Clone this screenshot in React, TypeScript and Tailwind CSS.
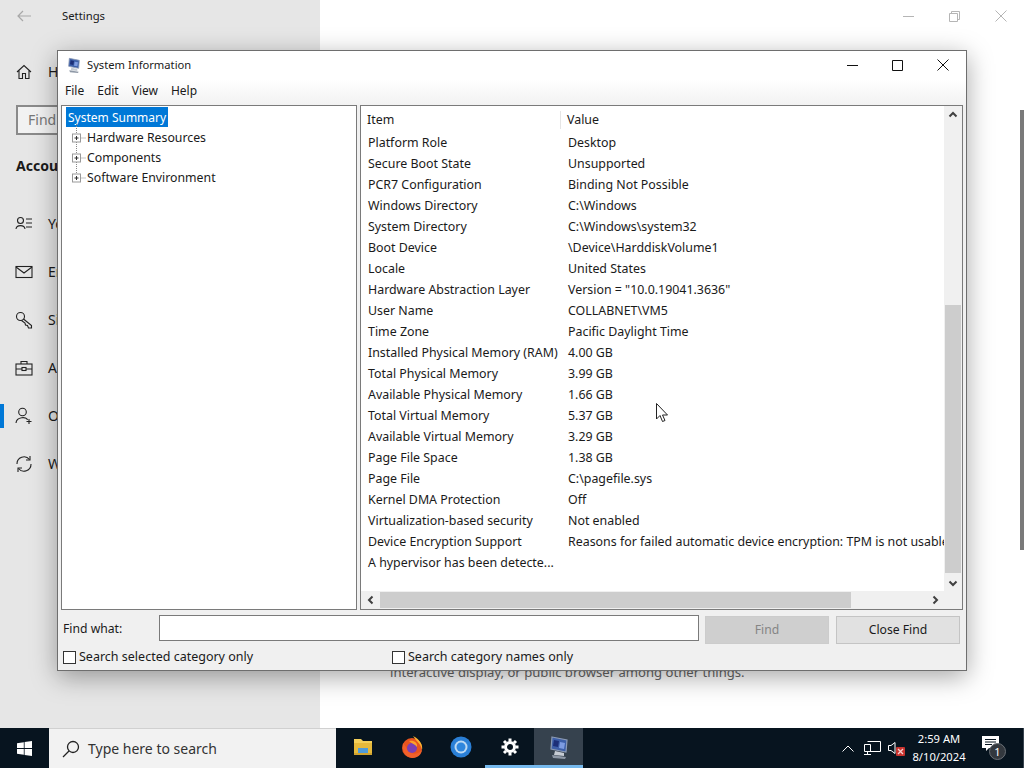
import React from "react";

const rows: [string, string][] = [
  ["Platform Role", "Desktop"],
  ["Secure Boot State", "Unsupported"],
  ["PCR7 Configuration", "Binding Not Possible"],
  ["Windows Directory", "C:\\Windows"],
  ["System Directory", "C:\\Windows\\system32"],
  ["Boot Device", "\\Device\\HarddiskVolume1"],
  ["Locale", "United States"],
  ["Hardware Abstraction Layer", 'Version = "10.0.19041.3636"'],
  ["User Name", "COLLABNET\\VM5"],
  ["Time Zone", "Pacific Daylight Time"],
  ["Installed Physical Memory (RAM)", "4.00 GB"],
  ["Total Physical Memory", "3.99 GB"],
  ["Available Physical Memory", "1.66 GB"],
  ["Total Virtual Memory", "5.37 GB"],
  ["Available Virtual Memory", "3.29 GB"],
  ["Page File Space", "1.38 GB"],
  ["Page File", "C:\\pagefile.sys"],
  ["Kernel DMA Protection", "Off"],
  ["Virtualization-based security", "Not enabled"],
  ["Device Encryption Support", "Reasons for failed automatic device encryption: TPM is not usable"],
  ["A hypervisor has been detecte...", ""],
];

const Chevron = ({ dir }: { dir: "up" | "down" | "left" | "right" }) => {
  const d = {
    up: "M1.5 6.5 L5 3 L8.5 6.5",
    down: "M1.5 3.5 L5 7 L8.5 3.5",
    left: "M6.5 1.5 L3 5 L6.5 8.5",
    right: "M3.5 1.5 L7 5 L3.5 8.5",
  }[dir];
  return (
    <svg width="10" height="10" viewBox="0 0 10 10" fill="none" stroke="#404040" strokeWidth="2">
      <path d={d} />
    </svg>
  );
};

const TreeItem = ({ label, last }: { label: string; last?: boolean }) => (
  <div className="relative flex h-5 items-center pl-[21px]">
    <svg className="absolute left-[6px] top-[-4px]" width="16" height="24" viewBox="0 0 16 24" fill="none">
      <path d={last ? "M4.5 0 V14" : "M4.5 0 V24"} stroke="#888" strokeDasharray="1 1" />
      <path d="M4.5 14 H14" stroke="#888" strokeDasharray="1 1" />
      <rect x="0.5" y="10" width="8" height="8" fill="#fff" stroke="#999" />
      <path d="M2.5 14 H6.5 M4.5 12 V16" stroke="#333" />
    </svg>
    <span>{label}</span>
  </div>
);

const SysInfoIcon = ({ size }: { size: number }) => (
  <svg width={size} height={size} viewBox="0 0 24 24">
    <path d="M5 2 L20 5 L19 17 L4 14 Z" fill="#3d5fa8" stroke="#8c9bb5" strokeWidth="1.2" />
    <path d="M7 5 L12 6 L11 12 L6 11 Z" fill="#1c2f78" />
    <path d="M13 7 L18 8 L17 14 L12 13 Z" fill="#7d9be0" />
    <path d="M8 16 L17 18 L17 21 L7 20 Z" fill="#c6ccd4" />
    <path d="M5 20 L19 22 L18 24 L6 23 Z" fill="#8e98a6" />
  </svg>
);

const NavIcon = ({ children }: { children: React.ReactNode }) => (
  <svg width="18" height="18" viewBox="0 0 18 18" fill="none" stroke="#222" strokeWidth="1.1">
    {children}
  </svg>
);

const navItems: [React.ReactNode, string][] = [
  [
    <NavIcon key="a">
      <circle cx="5.5" cy="5.5" r="3" />
      <path d="M1 14 C1.5 9.5 9.5 9.5 10 14 M11 4 H17 M11 8 H17 M11 12 H17" />
    </NavIcon>,
    "Yo",
  ],
  [
    <NavIcon key="b">
      <rect x="1" y="3.5" width="16" height="11" />
      <path d="M1 4 L9 10 L17 4" />
    </NavIcon>,
    "En",
  ],
  [
    <NavIcon key="c">
      <circle cx="5.5" cy="5.5" r="4" />
      <path d="M8.5 8 L16.5 14.5 V17 H13.5 L12.5 14.5 L10.5 14 L10 12 L6.5 9.5" />
    </NavIcon>,
    "Si",
  ],
  [
    <NavIcon key="d">
      <rect x="1" y="5" width="16" height="11" />
      <path d="M6 5 V2.5 H12 V5 M1 10 H7 M11 10 H17" />
      <rect x="7" y="8.5" width="4" height="3" />
    </NavIcon>,
    "A",
  ],
  [
    <NavIcon key="e">
      <circle cx="7.5" cy="5" r="3.8" />
      <path d="M1 16 C1.5 9.5 12 9.5 12.5 13 M14 12 V17 M11.5 14.5 H16.5" />
    </NavIcon>,
    "O",
  ],
  [
    <NavIcon key="f">
      <path d="M2 9 A7 7 0 0 1 14.5 4.5 M16 9 A7 7 0 0 1 3.5 13.5" />
      <path d="M15 1 V5 H11 M3 17 V13 H7" />
    </NavIcon>,
    "W",
  ],
];

const TaskIcon = ({ children, active, underline }: { children: React.ReactNode; active?: boolean; underline?: boolean }) => (
  <div className={`flex h-10 w-[49px] items-center justify-center border-b-[3px] ${active ? "bg-[#36424e]" : ""} ${underline ? "border-[#76b9ed]" : "border-transparent"}`}>
    {children}
  </div>
);

export default function App() {
  return (
    <div className="relative flex h-[768px] w-[1024px] flex-col overflow-hidden bg-white text-[12.5px] text-[#1a1a1a] [font-family:'Noto_Sans',sans-serif]">
      {/* Settings window behind */}
      <div className="flex h-[728px]">
        <div className="w-[320px] bg-[#e6e6e6]">
          <div className="flex h-8 items-center">
            <svg className="ml-[17px]" width="14" height="12" viewBox="0 0 14 12" fill="none" stroke="#a8a8a8" strokeWidth="1.2">
              <path d="M14 6 H1 M6 1 L1 6 L6 11" />
            </svg>
            <span className="ml-[31px] mt-[1px] text-[11.3px]">Settings</span>
          </div>
          <div className="mt-[28px] flex h-6 items-center pl-4">
            <svg width="16" height="16" viewBox="0 0 16 16" fill="none" stroke="#222" strokeWidth="1.1">
              <path d="M1 8 L8 1.5 L15 8 M3 6.5 V14.5 H6.5 V9.5 H9.5 V14.5 H13 V6.5" />
            </svg>
            <span className="ml-4 text-sm">Home</span>
          </div>
          <div className="ml-4 mt-[21px] flex h-[30px] w-[280px] items-center border-2 border-[#8a8a8a] bg-[#f2f2f2] pl-[10px] text-sm text-[#777]">
            Find a setting
          </div>
          <div className="ml-4 mt-[21px] text-sm font-bold">Accounts</div>
          <div className="mt-[24px] flex flex-col">
            {navItems.map(([icon, label], i) => (
              <div key={label} className="relative flex h-12 items-center pl-[15px]">
                {i === 4 && <div className="absolute left-0 top-3 h-6 w-1 bg-[#0078d7]" />}
                {icon}
                <span className="ml-[15px] text-sm">{label}</span>
              </div>
            ))}
          </div>
        </div>
        <div className="relative flex-1">
          <div className="flex h-8 items-center justify-end pr-[17px]">
            <svg className="mr-[35px]" width="11" height="11" viewBox="0 0 11 11" stroke="#b5b5b5" fill="none"><path d="M0 5.5 H11" /></svg>
            <svg className="mr-[35px]" width="11" height="11" viewBox="0 0 11 11" stroke="#b5b5b5" fill="none"><path d="M0.5 2.5 H8.5 V10.5 H0.5 Z M2.5 2.5 V0.5 H10.5 V8.5 H8.5" /></svg>
            <svg width="12" height="12" viewBox="0 0 12 12" stroke="#b5b5b5" fill="none"><path d="M0.5 0.5 L11.5 11.5 M11.5 0.5 L0.5 11.5" /></svg>
          </div>
          <div className="absolute right-0 top-[110px] h-[440px] w-1 bg-[#7a7a7a]" />
          <div className="ml-[70px] mt-[631px] text-[13.1px] text-[#666]">interactive display, or public browser among other things.</div>
        </div>
      </div>

      {/* System Information window */}
      <div className="absolute left-[57px] top-[50px] flex h-[621px] w-[910px] flex-col border border-[#6e6e6e] bg-[#f0f0f0] shadow-[0_6px_24px_rgba(0,0,0,0.35)]">
        <div className="flex h-[28px] shrink-0 items-center bg-white pl-2">
          <SysInfoIcon size={16} />
          <span className="ml-[5px] mt-[1px] text-[11.2px]">System Information</span>
          <div className="ml-auto flex items-center">
            <svg className="mr-[34px]" width="11" height="11" viewBox="0 0 11 11" stroke="#111" fill="none"><path d="M0 5.5 H11" /></svg>
            <svg className="mr-[34px]" width="11" height="11" viewBox="0 0 11 11" stroke="#111" fill="none"><path d="M0.5 0.5 H10.5 V10.5 H0.5 Z" /></svg>
            <svg className="mr-[17px]" width="12" height="12" viewBox="0 0 12 12" stroke="#111" fill="none"><path d="M0.5 0.5 L11.5 11.5 M11.5 0.5 L0.5 11.5" /></svg>
          </div>
        </div>
        <div className="flex h-[26px] shrink-0 items-center gap-[13px] bg-gradient-to-b from-white to-[#f2f2f2] pb-[2px] pl-[7px] text-xs">
          <span>File</span>
          <span>Edit</span>
          <span>View</span>
          <span>Help</span>
        </div>
        <div className="flex h-[505px] shrink-0 gap-[3px] px-[3px]">
          <div className="w-[296px] border border-[#7a7a7a] bg-white pl-[4px] pt-[1px] text-[12.3px]">
            <div className="flex h-5 items-center">
              <span className="flex h-5 w-[102px] items-center bg-[#0078d7] pl-[2px] pt-[1px] text-[12px] whitespace-nowrap text-white">System Summary</span>
            </div>
            <div className="mt-[1px]">
              <TreeItem label="Hardware Resources" />
              <TreeItem label="Components" />
              <TreeItem label="Software Environment" last />
            </div>
          </div>
          <div className="grid w-[603px] grid-cols-[1fr_18px] grid-rows-[1fr_18px] border border-[#7a7a7a] bg-white text-[12.4px]">
            <div className="overflow-hidden">
              <div className="flex h-[27px] items-center pt-[1px]">
                <span className="w-[200px] border-r border-[#e5e5e5] pl-[6px]">Item</span>
                <span className="pl-[6px]">Value</span>
              </div>
              <div>
                {rows.map(([k, v]) => (
                  <div key={k} className="flex h-[21px] items-center whitespace-nowrap">
                    <span className="w-[201px] shrink-0 pl-[7px]">{k}</span>
                    <span className="pl-[6px]">{v}</span>
                  </div>
                ))}
              </div>
            </div>
            <div className="flex flex-col bg-[#f0f0f0]">
              <div className="flex h-[17px] items-center justify-center"><Chevron dir="up" /></div>
              <div className="flex-1 px-[1px] pt-[182px]"><div className="h-[268px] bg-[#cdcdcd]" /></div>
              <div className="flex h-[17px] items-center justify-center"><Chevron dir="down" /></div>
            </div>
            <div className="flex items-center bg-[#f0f0f0]">
              <div className="flex h-[16px] w-[19px] items-center justify-center"><Chevron dir="left" /></div>
              <div className="h-[16px] w-[471px] bg-[#cdcdcd]" />
              <div className="ml-auto flex h-[16px] w-[18px] items-center justify-center"><Chevron dir="right" /></div>
            </div>
            <div className="bg-[#f0f0f0]" />
          </div>
        </div>
        <div className="flex h-[35px] items-center pl-[5px] text-[12.2px]">
          <span className="mt-[3px] w-[96px]">Find what:</span>
          <div className="mt-[1px] h-[26px] w-[540px] border border-[#7a7a7a] bg-white" />
          <div className="ml-[6px] mt-[5px] flex h-[28px] w-[124px] items-center justify-center border border-[#cccccc] bg-[#cfcfcf] text-[#858585]">Find</div>
          <div className="ml-[7px] mt-[5px] flex h-[28px] w-[124px] items-center justify-center border border-[#c4c4c4] bg-[#e1e1e1]">Close Find</div>
        </div>
        <div className="flex flex-1 items-start pl-[5px] pt-[3px]">
          <div className="flex w-[329px] items-center gap-[3px]">
            <div className="h-[13px] w-[13px] border border-[#333] bg-white" />
            <span>Search selected category only</span>
          </div>
          <div className="flex items-center gap-[3px]">
            <div className="h-[13px] w-[13px] border border-[#333] bg-white" />
            <span>Search category names only</span>
          </div>
        </div>
      </div>

      {/* mouse pointer */}
      <svg className="absolute left-[656px] top-[403px]" width="13" height="20" viewBox="0 0 13 20">
        <path d="M0.5 0.5 V16 L4 12.5 L6.5 18.5 L9 17.5 L6.5 12 H11.5 Z" fill="#fff" stroke="#222" />
      </svg>

      {/* Taskbar */}
      <div className="flex h-10 items-center bg-[#07141f] text-white">
        <div className="flex h-10 w-[49px] items-center justify-center">
          <svg width="15" height="15" viewBox="0 0 15 15" fill="#fff">
            <path d="M0 2.2 L6.8 1.2 V7.1 H0 Z M7.6 1.1 L15 0 V7.1 H7.6 Z M0 7.9 H6.8 V13.8 L0 12.8 Z M7.6 7.9 H15 V15 L7.6 13.9 Z" />
          </svg>
        </div>
        <div className="flex h-10 w-[287px] items-center border-t border-[#d0d0d0] bg-[#f2f2f2] pl-[13px] text-[#333]">
          <svg width="18" height="18" viewBox="0 0 18 18" fill="none" stroke="#222" strokeWidth="1.3">
            <circle cx="11" cy="7" r="5.5" />
            <path d="M7 11 L1 17" />
          </svg>
          <span className="ml-[8px] text-sm">Type here to search</span>
        </div>
        <div className="ml-[2px] flex">
          <TaskIcon>
            <svg width="20" height="20" viewBox="0 0 20 20">
              <path d="M1 2 H8 L10 4 H19 V18 H1 Z" fill="#f4cf5a" />
              <rect x="1" y="6" width="18" height="12" fill="#e6b93b" />
              <rect x="5" y="11" width="10" height="5" fill="#4f9bd9" />
              <rect x="1" y="16" width="18" height="2" fill="#cfa22e" />
            </svg>
          </TaskIcon>
          <TaskIcon>
            <svg width="22" height="24" viewBox="0 0 22 24">
              <circle cx="11" cy="13" r="10" fill="#e8541f" />
              <path d="M12 1 C20 5 22 11 21 15 C20 9 16 7 12 1 Z" fill="#fbb330" />
              <path d="M2 8 C1 14 3 22 11 23 C19 23 21 17 21 14 C19 20 8 21 5 12 Z" fill="#f2602a" />
              <circle cx="11" cy="13" r="5" fill="#7b3fb5" />
              <path d="M8 6 C13 5 17 8 16 12 C14 9 11 9 8 6 Z" fill="#fca12c" />
            </svg>
          </TaskIcon>
          <TaskIcon>
            <svg width="22" height="22" viewBox="0 0 22 22">
              <circle cx="11" cy="11" r="10.5" fill="#2a7fd6" />
              <circle cx="11" cy="11" r="6.5" fill="#bcd9f3" />
              <circle cx="11" cy="11" r="4.5" fill="#2f86dd" />
            </svg>
          </TaskIcon>
          <TaskIcon underline>
            <svg width="18" height="18" viewBox="0 0 18 18" fill="none" stroke="#fff">
              <circle cx="9" cy="9" r="4.5" strokeWidth="3" />
              <path d="M9 0.5 V3.5 M9 14.5 V17.5 M0.5 9 H3.5 M14.5 9 H17.5 M3 3 L5 5 M13 13 L15 15 M15 3 L13 5 M5 13 L3 15" strokeWidth="3" />
            </svg>
          </TaskIcon>
          <TaskIcon active underline>
            <SysInfoIcon size={24} />
          </TaskIcon>
        </div>
        <div className="ml-auto flex h-10 items-center border-r border-[#3a4550]">
          <svg width="12" height="7" viewBox="0 0 12 7" fill="none" stroke="#fff"><path d="M0.5 6.5 L6 1 L11.5 6.5" /></svg>
          <svg className="ml-[10px]" width="17" height="14" viewBox="0 0 17 14" fill="none" stroke="#fff">
            <path d="M3.5 0.5 H16.5 V10.5 H5 M0.5 3.5 H6.5 V10.5 H0.5 Z M0 13.5 H7 M3.5 10.5 V13.5" />
          </svg>
          <div className="relative ml-[7px] h-5 w-[17px]">
            <svg className="absolute left-0 top-[4px]" width="8" height="12" viewBox="0 0 8 12" fill="none" stroke="#fff">
              <path d="M0.5 3.5 H3 L7 0.5 V11.5 L3 8.5 H0.5 Z" />
            </svg>
            <svg className="absolute left-[8px] top-[9px]" width="9" height="9" viewBox="0 0 9 9">
              <rect width="9" height="9" rx="1" fill="#c8332e" />
              <path d="M2 2 L7 7 M7 2 L2 7" stroke="#f8d0d0" strokeWidth="1.3" />
            </svg>
          </div>
          <div className="flex w-[68px] flex-col items-center text-[11.2px] leading-[18px]">
            <span>2:59 AM</span>
            <span>8/10/2024</span>
          </div>
          <div className="relative ml-[9px] mr-[15px] h-6 w-[26px]">
            <svg className="absolute left-0 top-[0px]" width="17" height="15" viewBox="0 0 17 15">
              <path d="M0 0 H17 V12 H7 L4 15 V12 H0 Z" fill="#fff" />
              <path d="M3 3.5 H14 M3 6 H14 M3 8.5 H10" stroke="#07141f" />
            </svg>
            <span className="absolute left-[7px] top-[7px] flex h-[17px] w-[17px] items-center justify-center rounded-full border border-[#6a6f75] bg-[#33383e] text-[11px] leading-none text-white">1</span>
          </div>
        </div>
      </div>
    </div>
  );
}
